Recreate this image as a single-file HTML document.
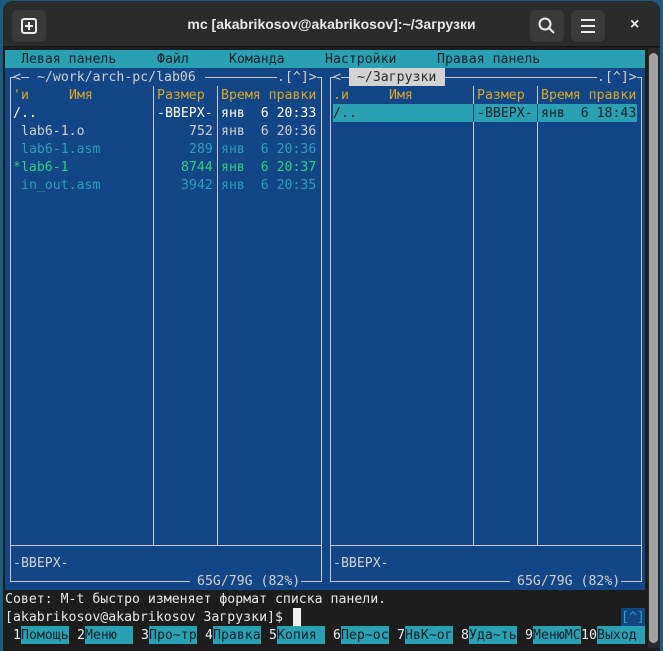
<!DOCTYPE html>
<html><head><meta charset="utf-8"><style>
*{margin:0;padding:0;box-sizing:border-box}
body{width:663px;height:645px;overflow:hidden;background:#1d5b80;position:relative;font-family:"DejaVu Sans Mono",monospace}
#win{position:absolute;left:3px;top:1px;width:657px;height:650px;background:#1d1d1d;border-radius:10px 10px 0 0;overflow:hidden}
#tb{position:absolute;left:0;top:0;width:657px;height:46px;background:#2b2b2b;border-bottom:1px solid #151515}
.btn{position:absolute;top:9px;width:34px;height:32px;background:#3a3a3a;border-radius:6px}
#title{position:absolute;left:0;width:657px;top:15px;text-align:center;color:#e8e8e8;font:bold 14px "Liberation Sans",sans-serif}
.bg{position:absolute}
.t{position:absolute;white-space:pre;font-family:"DejaVu Sans Mono",monospace;font-size:13.2px;line-height:18px;color:#d0d0d0;margin-top:1px}
.h{position:absolute;height:1px;background:#c8c8c8}
.v{position:absolute;width:1px;background:#c8c8c8}
.y{color:#dba62a}.c{color:#2e9fb5}.g{color:#33d17a}.k{color:#15202a}
</style></head><body>
<div id="win">
<div id="tb">
 <div class="btn" style="left:9px"><svg width="34" height="32"><rect x="10" y="9" width="14" height="14" rx="2" fill="none" stroke="#eee" stroke-width="2"/><path d="M17 12v8M13 16h8" stroke="#eee" stroke-width="2"/></svg></div>
 <div id="title">mc [akabrikosov@akabrikosov]:~/Загрузки</div>
 <div class="btn" style="left:527px"><svg width="34" height="32"><circle cx="15" cy="14" r="5.5" fill="none" stroke="#eee" stroke-width="2"/><path d="M19 18l5 5" stroke="#eee" stroke-width="2"/></svg></div>
 <div class="btn" style="left:568px"><svg width="34" height="32"><path d="M10 10h14M10 16h14M10 22h14" stroke="#eee" stroke-width="2"/></svg></div>
 <div style="position:absolute;left:627px;top:15px;color:#eee;font:bold 16px 'Liberation Sans',sans-serif">×</div>
</div>
<div style="position:absolute;left:645px;top:47px;width:12px;height:600px;background:#2a2a2a"></div>
<div style="position:absolute;left:646px;top:52px;width:9px;height:590px;background:#a3a3a3;border-radius:5px"></div>
</div>
<div id="t" style="position:absolute;left:0;top:0;width:663px;height:645px">
<div class="bg" style="left:5px;top:50px;width:640px;height:18px;background:#2aa1b3"></div>
<div class="bg" style="left:5px;top:68px;width:640px;height:522px;background:#134687"></div>
<div class="bg" style="left:333px;top:104px;width:304px;height:18px;background:#2aa1b3"></div>
<div class="bg" style="left:349px;top:68px;width:96px;height:18px;background:#d3d3d3"></div>
<div class="bg" style="left:621px;top:608px;width:24px;height:18px;background:#134687"></div>
<div class="bg" style="left:293px;top:608px;width:8px;height:18px;background:#f0f0f0"></div>
<div class="bg" style="left:21px;top:626px;width:48px;height:18px;background:#2aa1b3"></div>
<div class="bg" style="left:85px;top:626px;width:48px;height:18px;background:#2aa1b3"></div>
<div class="bg" style="left:149px;top:626px;width:48px;height:18px;background:#2aa1b3"></div>
<div class="bg" style="left:213px;top:626px;width:48px;height:18px;background:#2aa1b3"></div>
<div class="bg" style="left:277px;top:626px;width:48px;height:18px;background:#2aa1b3"></div>
<div class="bg" style="left:341px;top:626px;width:48px;height:18px;background:#2aa1b3"></div>
<div class="bg" style="left:405px;top:626px;width:48px;height:18px;background:#2aa1b3"></div>
<div class="bg" style="left:469px;top:626px;width:48px;height:18px;background:#2aa1b3"></div>
<div class="bg" style="left:533px;top:626px;width:48px;height:18px;background:#2aa1b3"></div>
<div class="bg" style="left:597px;top:626px;width:48px;height:18px;background:#2aa1b3"></div>

<div class="h" style="left:10px;top:77px;width:4px"></div>
<div class="h" style="left:21px;top:77px;width:8px"></div>
<div class="h" style="left:205px;top:77px;width:72px"></div>
<div class="h" style="left:317px;top:77px;width:5px"></div>
<div class="v" style="left:10px;top:77px;height:505px"></div>
<div class="v" style="left:321px;top:77px;height:505px"></div>
<div class="v" style="left:153px;top:86px;height:459px"></div>
<div class="v" style="left:217px;top:86px;height:459px"></div>
<div class="h" style="left:10px;top:545px;width:312px"></div>
<div class="h" style="left:10px;top:581px;width:180px"></div>
<div class="h" style="left:301px;top:581px;width:21px"></div>
<div class="h" style="left:330px;top:77px;width:4px"></div>
<div class="h" style="left:341px;top:77px;width:8px"></div>
<div class="h" style="left:445px;top:77px;width:152px"></div>
<div class="h" style="left:637px;top:77px;width:5px"></div>
<div class="v" style="left:330px;top:77px;height:505px"></div>
<div class="v" style="left:641px;top:77px;height:505px"></div>
<div class="v" style="left:473px;top:86px;height:459px"></div>
<div class="v" style="left:537px;top:86px;height:459px"></div>
<div class="v" style="left:473px;top:104px;height:18px;background:#134687"></div>
<div class="v" style="left:537px;top:104px;height:18px;background:#134687"></div>
<div class="h" style="left:330px;top:545px;width:312px"></div>
<div class="h" style="left:330px;top:581px;width:180px"></div>
<div class="h" style="left:621px;top:581px;width:21px"></div>

<span class="t k" style="left:21px;top:50px">Левая панель</span>
<span class="t k" style="left:157px;top:50px">Файл</span>
<span class="t k" style="left:229px;top:50px">Команда</span>
<span class="t k" style="left:325px;top:50px">Настройки</span>
<span class="t k" style="left:437px;top:50px">Правая панель</span>

<span class="t" style="left:13px;top:68px">&lt;</span>
<span class="t" style="left:37px;top:68px">~/work/arch-pc/lab06</span>
<span class="t" style="left:277px;top:68px">.[^]&gt;</span>
<span class="t" style="left:333px;top:68px">&lt;</span>
<span class="t" style="left:349px;top:68px;color:#2a2a2a"> ~/Загрузки</span>
<span class="t" style="left:597px;top:68px">.[^]&gt;</span>

<span class="t y" style="left:13px;top:86px">'и</span>
<span class="t y" style="left:69px;top:86px">Имя</span>
<span class="t y" style="left:157px;top:86px">Размер</span>
<span class="t y" style="left:221px;top:86px">Время правки</span>
<span class="t y" style="left:333px;top:86px">.и</span>
<span class="t y" style="left:389px;top:86px">Имя</span>
<span class="t y" style="left:477px;top:86px">Размер</span>
<span class="t y" style="left:541px;top:86px">Время правки</span>

<span class="t" style="left:13px;top:104px;color:#fff">/..</span>
<span class="t" style="left:157px;top:104px;color:#fff">-ВВЕРХ-</span>
<span class="t" style="left:221px;top:104px;color:#fff">янв  6 20:33</span>
<span class="t k" style="left:333px;top:104px">/..</span>
<span class="t k" style="left:477px;top:104px">-ВВЕРХ-</span>
<span class="t k" style="left:541px;top:104px">янв  6 18:43</span>

<span class="t" style="left:21px;top:122px">lab6-1.o</span>
<span class="t" style="left:189px;top:122px">752</span>
<span class="t" style="left:221px;top:122px">янв  6 20:36</span>
<span class="t c" style="left:21px;top:140px">lab6-1.asm</span>
<span class="t c" style="left:189px;top:140px">289</span>
<span class="t c" style="left:221px;top:140px">янв  6 20:36</span>
<span class="t g" style="left:13px;top:158px">*lab6-1</span>
<span class="t g" style="left:181px;top:158px">8744</span>
<span class="t g" style="left:221px;top:158px">янв  6 20:37</span>
<span class="t c" style="left:21px;top:176px">in_out.asm</span>
<span class="t c" style="left:181px;top:176px">3942</span>
<span class="t c" style="left:221px;top:176px">янв  6 20:35</span>

<span class="t" style="left:13px;top:554px">-ВВЕРХ-</span>
<span class="t" style="left:333px;top:554px">-ВВЕРХ-</span>
<span class="t" style="left:197px;top:572px">65G/79G (82%)</span>
<span class="t" style="left:517px;top:572px">65G/79G (82%)</span>

<span class="t" style="left:5px;top:590px;color:#e8e8e8">Совет: M-t быстро изменяет формат списка панели.</span>
<span class="t" style="left:5px;top:608px;color:#e8e8e8">[akabrikosov@akabrikosov Загрузки]$</span>
<span class="t c" style="left:621px;top:608px">[^]</span>

<span class="t" style="left:13px;top:626px;color:#eee">1</span><span class="t k" style="left:21px;top:626px">Помощь</span>
<span class="t" style="left:77px;top:626px;color:#eee">2</span><span class="t k" style="left:85px;top:626px">Меню</span>
<span class="t" style="left:141px;top:626px;color:#eee">3</span><span class="t k" style="left:149px;top:626px">Про~тр</span>
<span class="t" style="left:205px;top:626px;color:#eee">4</span><span class="t k" style="left:213px;top:626px">Правка</span>
<span class="t" style="left:269px;top:626px;color:#eee">5</span><span class="t k" style="left:277px;top:626px">Копия</span>
<span class="t" style="left:333px;top:626px;color:#eee">6</span><span class="t k" style="left:341px;top:626px">Пер~ос</span>
<span class="t" style="left:397px;top:626px;color:#eee">7</span><span class="t k" style="left:405px;top:626px">НвК~ог</span>
<span class="t" style="left:461px;top:626px;color:#eee">8</span><span class="t k" style="left:469px;top:626px">Уда~ть</span>
<span class="t" style="left:525px;top:626px;color:#eee">9</span><span class="t k" style="left:533px;top:626px">МенюМС</span>
<span class="t" style="left:581px;top:626px;color:#eee">10</span><span class="t k" style="left:597px;top:626px">Выход</span>
</div>
</body></html>
